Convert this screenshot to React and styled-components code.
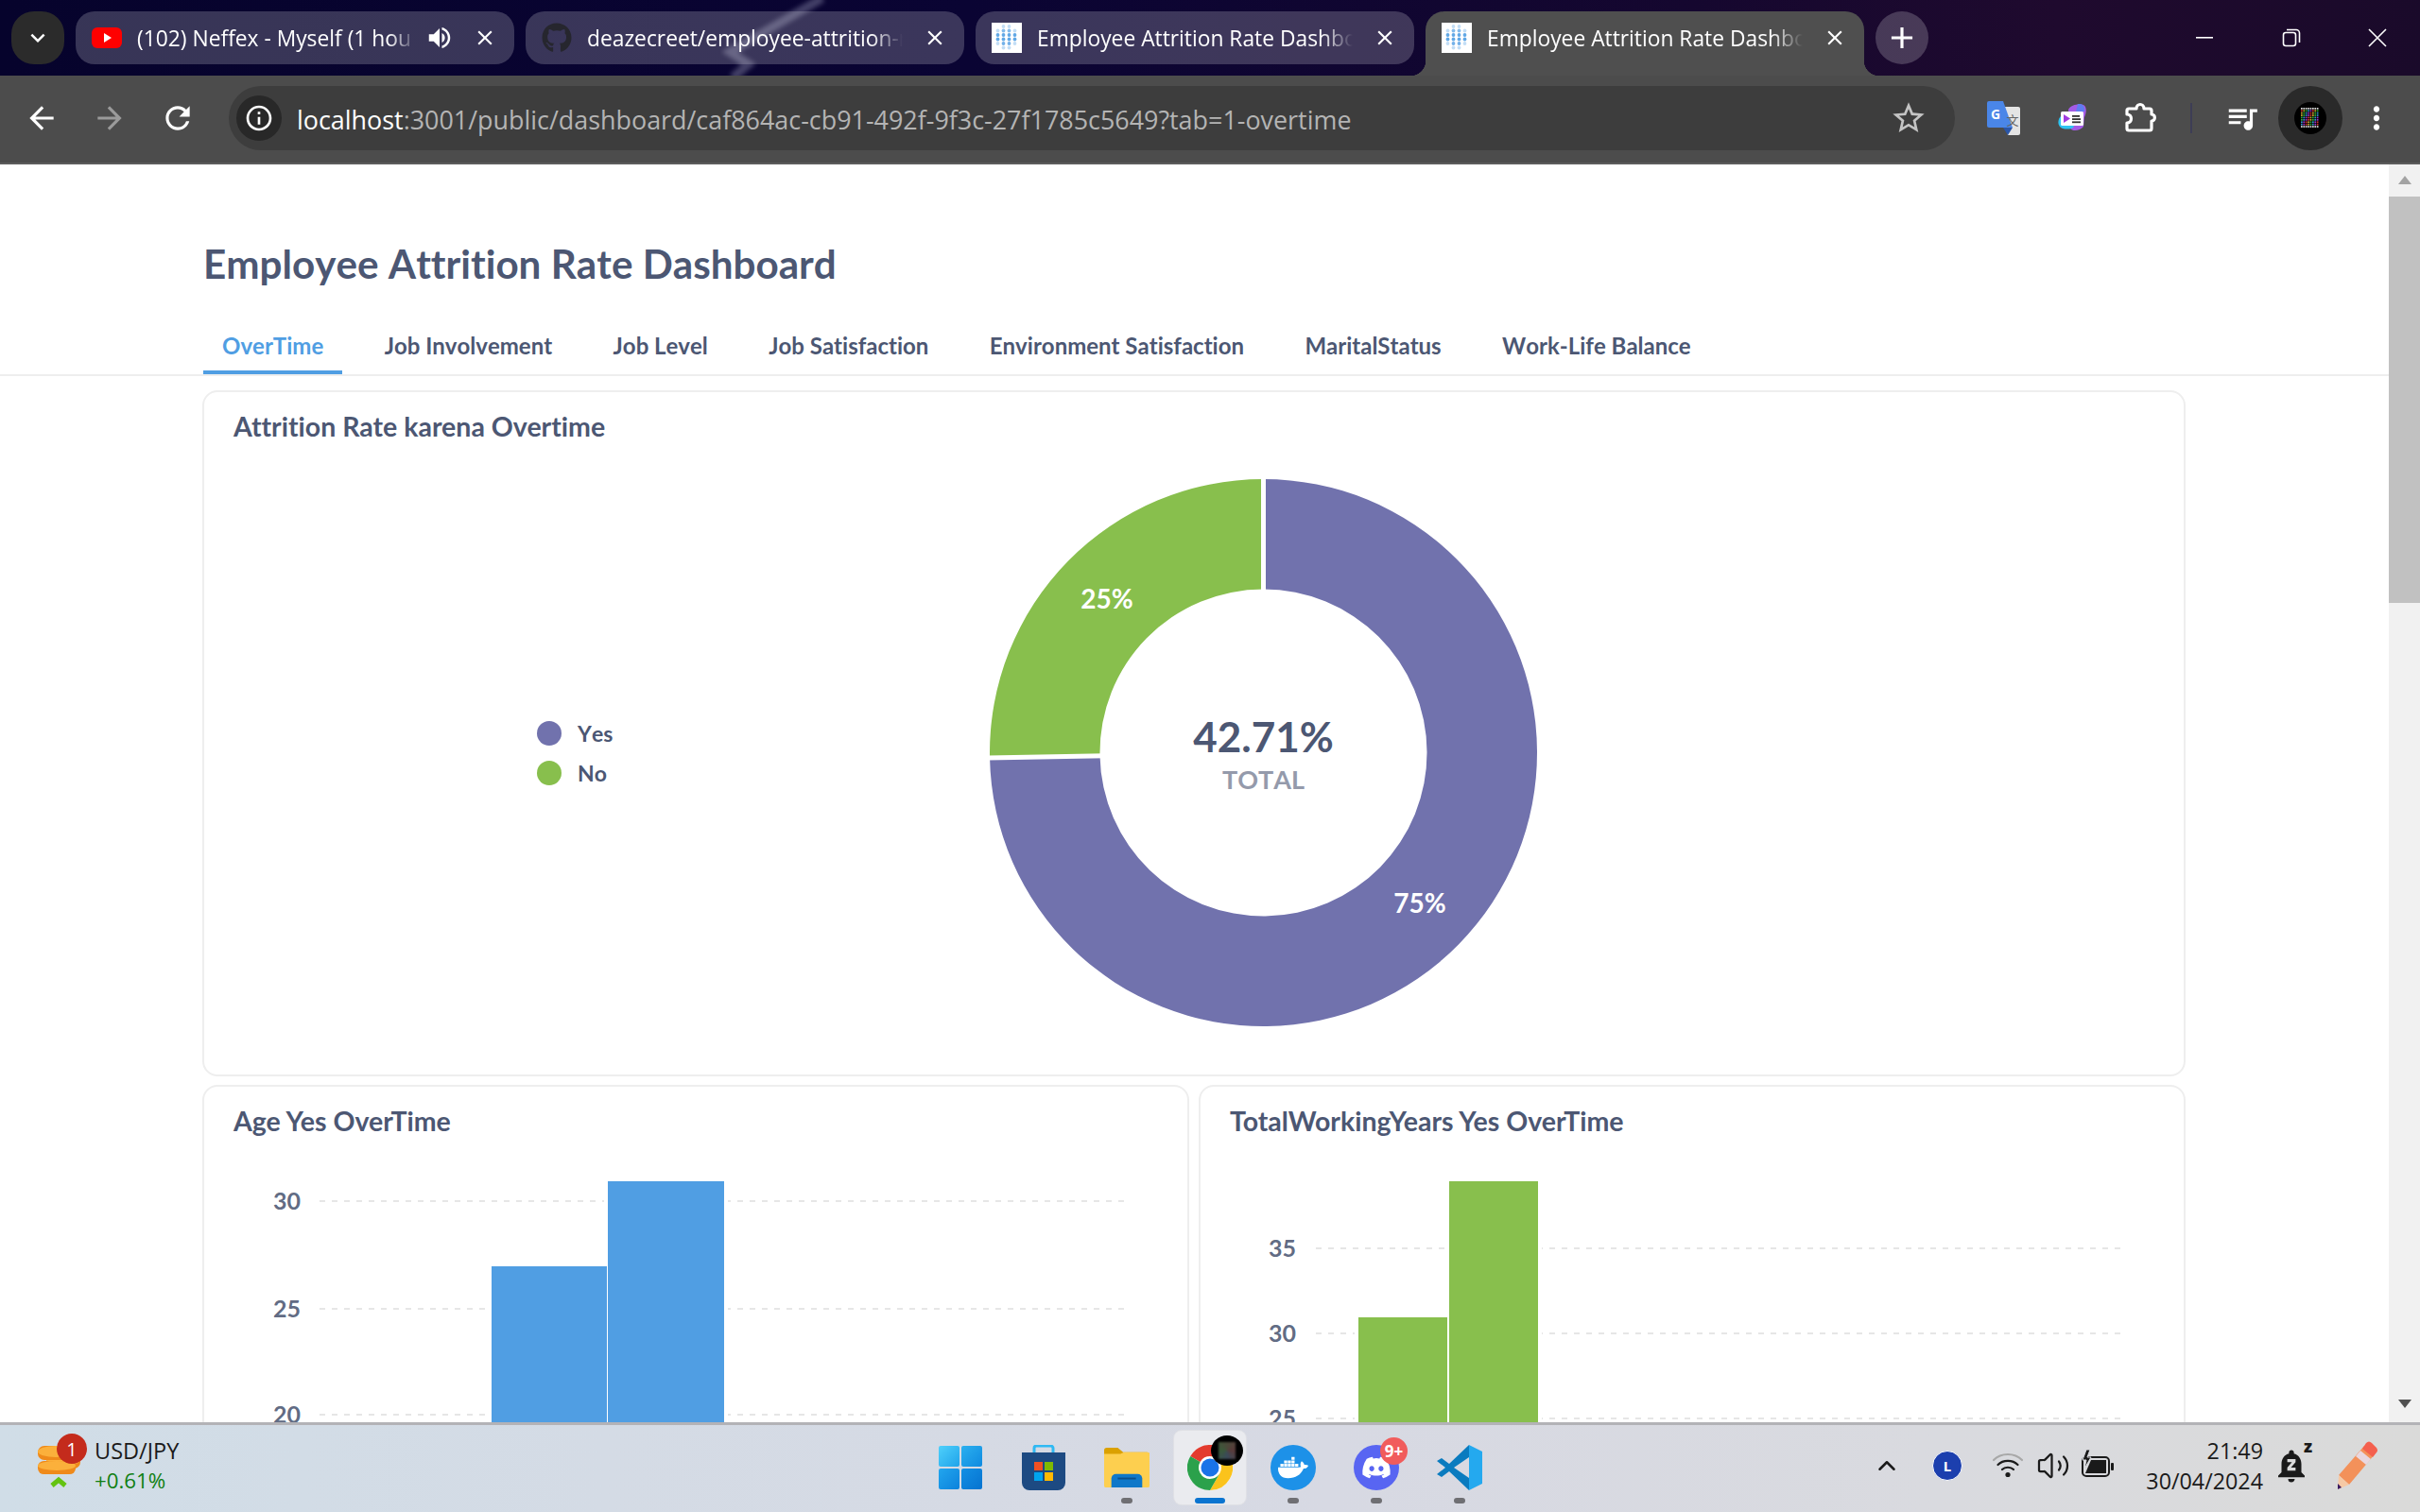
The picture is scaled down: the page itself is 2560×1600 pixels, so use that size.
import React from 'react';
import styled, { createGlobalStyle } from 'styled-components';
import { MdArrowBack, MdArrowForward, MdRefresh, MdInfoOutline, MdStarBorder, MdClose, MdAdd, MdMoreVert, MdQueueMusic, MdVolumeUp, MdKeyboardArrowDown, MdNotificationsPaused } from 'react-icons/md';
import { FaGithub, FaDocker, FaDiscord } from 'react-icons/fa';
import { Volume2, ChevronUp } from 'lucide-react';

const Global = createGlobalStyle`
  html, body { margin: 0; padding: 0; height: 100%; overflow: hidden; background: #fff; }
  #root { height: 100%; }
  * { box-sizing: border-box; }
`;

const Screen = styled.div`
  width: 2560px; height: 1600px; display: flex; flex-direction: column; overflow: hidden;
  font-family: "Lato", "Liberation Sans", sans-serif;
`;

/* ---------- browser chrome ---------- */
const TabStrip = styled.div`
  position: relative; height: 80px; flex: none; display: flex; gap: 12px; padding: 12px 0 0 12px;
  background: linear-gradient(90deg, #06032c 0%, #0a0433 40%, #15072f 70%, #1f0a2e 85%, #1a0a2a 100%);
`;
const Streak = styled.svg`
  position: absolute; left: 0; top: 0; width: 1000px; height: 80px;
`;
const TabListBtn = styled.div`
  position: relative; width: 56px; height: 56px; border-radius: 24px; background: #2b2b2b; color: #fff;
  display: flex; align-items: center; justify-content: center; font-size: 30px; flex: none;
`;
const Tab = styled.div`
  position: relative; width: 464px; flex: none; display: flex; align-items: center;
  height: ${p => (p.$active ? '68px' : '56px')};
  padding: ${p => (p.$active ? '0 7px 12px 17px' : '0 7px 0 17px')};
  border-radius: ${p => (p.$active ? '20px 20px 0 0' : '20px')};
  background: ${p => (p.$active ? '#4f4f4f' : 'rgba(255,255,255,0.2)')};
  color: #fff; font: 400 22.8px "Open Sans", sans-serif;
  ${p => p.$active && `
    &::before, &::after { content: ''; position: absolute; bottom: 0; width: 16px; height: 16px; }
    &::before { left: -16px; background: radial-gradient(circle at 0 0, transparent 16px, #4f4f4f 16.5px); }
    &::after { right: -16px; background: radial-gradient(circle at 100% 0, transparent 16px, #4f4f4f 16.5px); }
  `}
`;
const TabTitle = styled.span`
  flex: 1; min-width: 0; margin-left: 16px; margin-right: ${p => p.$gap || 0}px; white-space: nowrap; overflow: hidden;
  -webkit-mask-image: linear-gradient(90deg, #000 90%, transparent 100%);
  mask-image: linear-gradient(90deg, #000 90%, transparent 100%);
`;
const TabGlyph = styled.span`
  width: 48px; height: 48px; flex: none; display: flex; align-items: center; justify-content: center; font-size: ${p => p.$size || 26}px;
`;
const FavBox = styled.span`
  width: 32px; height: 32px; flex: none; display: flex; align-items: center; justify-content: center;
  color: #26262e; font-size: 32px;
`;
const NewTab = styled.div`
  position: relative; width: 56px; height: 56px; border-radius: 50%; background: rgba(255,255,255,0.2); color: #fff; flex: none;
  display: flex; align-items: center; justify-content: center; font-size: 38px;
`;
const WinControls = styled.div`
  position: relative; margin-left: auto; display: flex; height: 56px;
`;
const WinBtn = styled.div`
  width: 91px; display: flex; align-items: center; justify-content: center;
`;
const Toolbar = styled.div`
  height: 94px; flex: none; display: flex; align-items: center; padding: 0 0 2px 8px;
  background: #4c4c4c; border-bottom: 2px solid #5c5c5c;
`;
const ToolBtn = styled.div`
  width: 72px; height: 72px; flex: none; display: flex; align-items: center; justify-content: center;
  color: ${p => p.$dim ? '#9a9a9a' : '#fff'}; font-size: ${p => p.$size || 38}px;
`;
const Omnibox = styled.div`
  width: 1826px; height: 68px; margin: 0 16px 0 18px; border-radius: 34px; background: #3d3d3d; flex: none;
  display: flex; align-items: center; padding: 0 12px 0 8px; font: 400 26.9px "Open Sans", sans-serif;
`;
const InfoBadge = styled.div`
  width: 48px; height: 48px; border-radius: 50%; background: #282828; color: #fff; font-size: 32px; flex: none;
  display: flex; align-items: center; justify-content: center;
`;
const Url = styled.div`
  flex: 1; margin-left: 16px; padding-top: 2px; color: #b4b4b4; white-space: nowrap;
  & b { font-weight: 400; color: #fff; }
`;
const StarBtn = styled.div`
  width: 50px; color: #c4c4c4; font-size: 40px; display: flex; justify-content: center; margin-right: 12px;
`;
const Divider = styled.div`
  width: 2px; height: 32px; margin: 0 17px; background: #3d3d55; flex: none;
`;
const Avatar = styled.div`
  width: 68px; height: 68px; border-radius: 50%; background: #2a2a2a; margin-left: 2px; flex: none;
  display: flex; align-items: center; justify-content: center;
`;

/* ---------- page ---------- */
const Viewport = styled.div`
  flex: 1; min-height: 0; display: flex; background: #fff;
`;
const Page = styled.main`
  flex: 1; min-width: 0; overflow: hidden; font-kerning: none; font-variant-ligatures: none;
`;
const Title = styled.h1`
  margin: 0; padding: 83px 0 0 215px; font-size: 42.2px; line-height: 44px; font-weight: 700; color: #4c5773;
`;
const TabNav = styled.nav`
  display: flex; gap: 24.4px; padding-left: 215px; margin-top: 35px; height: 62px; border-bottom: 2px solid #eeeeee;
`;
const NavItem = styled.div`
  height: 60px; padding: 2px 20px 0; display: flex; align-items: center; font-size: 24px; font-weight: 700;
  color: ${p => (p.$active ? '#509ee3' : '#4c5773')};
  border-bottom: 4px solid ${p => (p.$active ? '#509ee3' : 'transparent')};
`;
const Grid = styled.div`
  display: grid; grid-template-columns: 1fr 1fr; gap: 9px 10px; width: 2098px; margin: 15px 0 0 214px;
`;
const Card = styled.section`
  grid-column: ${p => (p.$wide ? '1 / 3' : 'auto')};
  height: ${p => p.$h}px; border: 2px solid #eeeeee; border-radius: 16px; background: #fff; padding-top: 21px;
`;
const CardTitle = styled.h2`
  margin: 0; padding-left: 31px; font-size: 28.5px; line-height: 30px; font-weight: 700; color: #4c5773; font-kerning: normal;
`;
const DonutBody = styled.div`
  display: flex; align-items: center; padding: 40px 0 0 352px;
`;
const Legend = styled.div`
  width: 479px; flex: none; display: flex; flex-direction: column; gap: 16px; padding-top: 2px;
`;
const LegendRow = styled.div`
  display: flex; align-items: center; gap: 17px; height: 26px; font-size: 23px; font-weight: 700; color: #4c5773;
`;
const LegendDot = styled.span`
  width: 26px; height: 26px; border-radius: 50%; background: ${p => p.$c};
`;
const ChartSvg = styled.svg`
  display: block; width: 1040px; height: 400px; font-family: "Lato", sans-serif;
`;
const DonutSvg = styled.svg`
  flex: none; margin: -2px; font-family: "Lato", sans-serif;
`;

const Scrollbar = styled.div`
  width: 33px; flex: none; background: #f1f1f1; display: flex; flex-direction: column; align-items: center; padding-top: 12px;
`;
const ScrollArrow = styled.div`
  width: 0; height: 0; border-left: 7px solid transparent; border-right: 7px solid transparent;
  ${p => p.$down ? 'border-top: 9px solid #505050; margin-top: auto; margin-bottom: 15px;' : 'border-bottom: 9px solid #a3a3a3;'}
`;
const ScrollThumb = styled.div`
  width: 100%; height: 430px; margin-top: 13px; background: #c1c1c1;
`;

/* ---------- taskbar ---------- */
const Taskbar = styled.footer`
  height: 95px; flex: none; display: flex; border-top: 3px solid #b3b3b7;
  background: linear-gradient(90deg, #d0dde7 0%, #d4dbe5 25%, #d7d9e3 55%, #d9dadf 80%, #dadad9 100%);
  font-family: "Open Sans", sans-serif;
`;
const Ticker = styled.div`
  width: 972px; flex: none; display: flex; padding: 9px 0 0 37px; gap: 13px;
`;
const CoinWrap = styled.div`
  position: relative; width: 50px; height: 66px; flex: none;
`;
const CoinBadge = styled.span`
  position: absolute; left: 23px; top: 0; width: 32px; height: 32px; border-radius: 50%; background: #c42b1c; color: #fff;
  font-size: 20px; display: flex; align-items: center; justify-content: center;
`;
const TickerText = styled.div`
  display: flex; flex-direction: column; gap: 2px; padding-top: 4px; font-size: 23.5px; line-height: 29px; color: #1a1a1a;
`;
const TickerDelta = styled.span`
  color: #0f7f12; font-size: 22.3px;
`;
const Apps = styled.div`
  display: flex; flex: none;
`;
const AppSlot = styled.div`
  position: relative; width: 88px; display: flex; flex-direction: column; align-items: center; padding-top: 21px; gap: 8px;
  ${p => p.$active && `
    &::before { content: ''; position: absolute; left: 6px; top: 6px; width: 76px; height: 78px; border-radius: 8px; background: #eaebef; box-shadow: 0 0 0 1px #dfe0e5; }
  `}
`;
const AppIcon = styled.div`
  position: relative; width: 48px; height: 48px; display: flex; align-items: center; justify-content: center;
`;
const Pip = styled.span`
  position: relative; width: ${p => (p.$active ? '32px' : '12px')}; height: 6px; border-radius: 3px;
  background: ${p => (p.$active ? '#0a74d0' : p.$none ? 'transparent' : '#6f6f73')};
`;
const WinTiles = styled.div`
  display: grid; grid-template-columns: 22px 22px; grid-template-rows: 22px 22px; gap: 2px;
`;
const WinTile = styled.span`
  border-radius: 2px; background: linear-gradient(135deg, ${p => p.$a}, ${p => p.$b});
`;
const RoundLogo = styled.div`
  width: 48px; height: 48px; border-radius: 50%; background: ${p => p.$c}; color: #fff; font-size: ${p => p.$s}px;
  display: flex; align-items: center; justify-content: center;
`;
const NineBadge = styled.span`
  position: absolute; left: 28px; top: -8px; width: 29px; height: 29px; border-radius: 50%; background: #f15c5c; color: #fff;
  font-size: 17px; font-weight: 700; display: flex; align-items: center; justify-content: center;
`;
const ChromeBlob = styled.span`
  position: absolute; left: 25px; top: -10px; width: 34px; height: 32px; border-radius: 50%; background: #000;
  display: flex; align-items: center; justify-content: center;
  &::after { content: ''; width: 18px; height: 18px; filter: blur(1px); background: conic-gradient(#4a4a3a, #5a3a3a, #3a4a5a, #3a5a3a, #4a4a3a); }
`;
const Tray = styled.div`
  margin-left: auto; padding-right: 34px; display: flex; align-items: center; padding-bottom: 6px; color: #1a1a1a;
`;
const TraySlot = styled.div`
  position: relative; width: ${p => p.$w}px; margin-left: ${p => p.$ml || 0}px; display: flex; align-items: center; justify-content: center; font-size: ${p => p.$s || 30}px;
`;
const LBadge = styled.div`
  width: 32px; height: 32px; border-radius: 50%; background: #1c3fae; border: 1px solid #fff; color: #fff; font: 700 15px "Open Sans", sans-serif;
  display: flex; align-items: center; justify-content: center;
`;
const Clock = styled.div`
  width: 150px; text-align: right; font-size: 23.3px; line-height: 32px; color: #1a1a1a; white-space: nowrap;
`;
const SnoozeZ = styled.span`
  position: absolute; right: 2px; top: -12px; font: 800 18px "Open Sans", sans-serif; color: #1a1a1a;
`;

/* ---------- drawings ---------- */
const MetabaseFav = () => {
  const cols = [6.5, 12.5, 18.5, 24.5];
  const rows = [4, 8.5, 13, 17.5, 22, 26.5];
  const o = [[0,.35,.35,0],[.35,.7,.7,.35],[.9,.9,.9,.9],[.9,.9,.9,.9],[.35,.8,.8,.35],[0,.35,.35,0]];
  return (
    <svg width="32" height="32" viewBox="0 0 32 32" style={{flex:'none'}}>
      <rect width="32" height="32" fill="#fff" />
      {rows.map((y, r) => cols.map((x, c) => <circle key={r + '-' + c} cx={x} cy={y} r="1.9" fill="#509ee3" opacity={o[r][c]} />))}
    </svg>
  );
};
const YouTubeFav = () => (
  <svg width="32" height="32" viewBox="0 0 32 32">
    <rect x="0" y="5" width="32" height="22" rx="6" fill="#f00" />
    <path d="M13 11 L21 16 L13 21 Z" fill="#fff" />
  </svg>
);
const ChromeLogo = () => (
  <svg width="48" height="48" viewBox="0 0 48 48">
    <circle cx="24" cy="24" r="24" fill="#fff" />
    <path d="M3.2 12 A24 24 0 0 1 44.8 12 L24 12 A12 12 0 0 0 13.6 18 Z" fill="#e33b2e" />
    <path d="M44.8 12 A24 24 0 0 1 24 48 L34.39 30 A12 12 0 0 0 24 12 Z" fill="#fbc31c" />
    <path d="M24 48 A24 24 0 0 1 3.2 12 L13.6 18 A12 12 0 0 0 34.39 30 Z" fill="#2ba14b" />
    <circle cx="24" cy="24" r="9.5" fill="#1a73e8" />
  </svg>
);
const StoreLogo = () => (
  <svg width="48" height="48" viewBox="0 0 48 48">
    <path d="M14 9 V3.5 A2.5 2.5 0 0 1 16.5 1 H31.5 A2.5 2.5 0 0 1 34 3.5 V9" fill="none" stroke="#2fb9f3" strokeWidth="3" />
    <path d="M1 8 H47 V40 A8 8 0 0 1 39 48 H9 A8 8 0 0 1 1 40 Z" fill="#1d4a82" />
    <rect x="14" y="18" width="9" height="9" fill="#f25022" />
    <rect x="25" y="18" width="9" height="9" fill="#7fba00" />
    <rect x="14" y="29" width="9" height="9" fill="#00a4ef" />
    <rect x="25" y="29" width="9" height="9" fill="#ffb900" />
  </svg>
);
const FolderLogo = () => (
  <svg width="50" height="44" viewBox="0 0 50 44">
    <path d="M0 3 A3 3 0 0 1 3 0 H15 L21 5 H47 A3 3 0 0 1 50 8 V12 H0 Z" fill="#dba100" />
    <path d="M0 7 H18 L22 5 H48 A2 2 0 0 1 50 7 V42 A2 2 0 0 1 48 44 H2 A2 2 0 0 1 0 42 Z" fill="#fdcf4f" />
    <path d="M8 44 V34 A5 5 0 0 1 13 29 H37 A5 5 0 0 1 42 34 V44 Z" fill="#0f78c9" />
    <rect x="15" y="33" width="20" height="2" fill="#0a4f8c" />
  </svg>
);
const VSCodeLogo = () => (
  <svg width="48" height="48" viewBox="0 0 48 48">
    <path d="M34 0 L48 7 V41 L34 48 Z" fill="#24a9ef" />
    <path d="M34 0 L13 20 L5 14 L0 17 L9 24 L0 31 L5 34 L13 28 L34 48 V35 L18 24 L34 13 Z" fill="#0a7bbf" />
  </svg>
);
const Coin = ({ x, y, w, h, t }) => (
  <g>
    <rect x={x} y={y} width={w} height={h} rx={h / 2.2} fill="#ef8a1a" />
    <ellipse cx={x + w / 2} cy={y + t} rx={w / 2} ry={t} fill="#fbb03b" />
  </g>
);
const CoinsIcon = () => (
  <svg width="50" height="66" viewBox="0 0 50 66">
    <Coin x={12} y={22} w={36} h={15} t={6} />
    <Coin x={3} y={13} w={38} h={15} t={6} />
    <Coin x={3} y={29} w={40} h={14} t={5} />
    <path d="M18 55 L25 49 L32 55" fill="none" stroke="#63c311" strokeWidth="5" />
  </svg>
);
const TranslateIcon = () => (
  <svg width="36" height="36" viewBox="0 0 36 36">
    <path d="M16 6 H33 A2 2 0 0 1 35 8 V34 A2 2 0 0 1 33 36 H22 Z" fill="#e4e4e4" />
    <path d="M2 0 H17 L27 28 H2 A2 2 0 0 1 0 26 V2 A2 2 0 0 1 2 0 Z" fill="#4a86e8" />
    <text x="9" y="19" fontFamily="Open Sans" fontSize="14" fontWeight="700" fill="#fff" textAnchor="middle">G</text>
    <text x="27" y="25" fontFamily="Noto Sans CJK SC" fontSize="13" fill="#666" textAnchor="middle">文</text>
    <path d="M17 28 H27 L22 36 Z" fill="#2a56a8" />
  </svg>
);
const ReaderIcon = () => (
  <svg width="32" height="30" viewBox="0 0 32 30">
    <path d="M12 6 C14 1 24 -1 28 1 C32 3 31 10 29 14 L28 24 C24 29 16 29 14 26 Z" fill="#a45be6" />
    <path d="M22 0 C26 -1 30 2 29 8 L20 8 Z" fill="#5f7cf0" />
    <path d="M5 12 C0 16 0 24 6 26 C10 27 16 27 18 24 L10 10 Z" fill="#2ec4f1" />
    <rect x="4" y="8" width="24" height="15" rx="1.5" fill="#fff" />
    <path d="M7 11 L14 15.5 L7 20 Z" fill="#a13be0" />
    <rect x="16" y="12" width="8" height="1.8" fill="#333" />
    <rect x="16" y="15.2" width="9" height="1.8" fill="#333" />
    <rect x="16" y="18.4" width="9" height="1.8" fill="#333" />
  </svg>
);
const PuzzleIcon = () => (
  <svg width="36" height="36" viewBox="-1 0 36 36" fill="none" stroke="#fff" strokeWidth="3.2" strokeLinejoin="round">
    <path d="M5 8 H13 C13 2 21 2 21 8 H27 A2 2 0 0 1 29 10 V14 C33.5 14 33.5 21 29 21 V29 A2 2 0 0 1 27 31 H5 A2 2 0 0 1 3 29 V23 C9 23 9 14 3 14 V10 A2 2 0 0 1 5 8Z" />
  </svg>
);
const MosaicAvatar = () => {
  const colors = ['#c33','#ca3','#3a3','#39c','#93c','#ddd'];
  const cells = [];
  for (let r = 0; r < 9; r++) for (let c = 0; c < 8; c++) {
    const col = r < 1 || r > 7 ? '#ddd' : colors[(c + Math.floor(r / 2)) % 5];
    cells.push(<rect key={r + '_' + c} x={7 + c * 2.4} y={6 + r * 2.4} width="1.7" height="1.7" fill={col} />);
  }
  return (
    <svg width="34" height="34" viewBox="0 0 34 34">
      <circle cx="17" cy="17" r="17" fill="#000" />
      {cells}
    </svg>
  );
};
const WifiIcon = () => (
  <svg width="34" height="30" viewBox="0 0 34 30" fill="none" strokeLinecap="round" strokeWidth="2.2">
    <path d="M2 9 C10 1 24 1 32 9" stroke="#a8a8a8" />
    <path d="M6.5 14 C12 8.5 22 8.5 27.5 14" stroke="#1a1a1a" />
    <path d="M11 19 C14 16 20 16 23 19" stroke="#1a1a1a" />
    <circle cx="17" cy="24.5" r="2.6" fill="#1a1a1a" stroke="none" />
  </svg>
);
const BatteryIcon = () => (
  <svg width="38" height="34" viewBox="0 0 38 34">
    <rect x="2" y="8" width="28" height="20" rx="4" fill="none" stroke="#1a1a1a" strokeWidth="2" />
    <path d="M5 25 L11 11 H27 V25 Z" fill="#1a1a1a" />
    <rect x="32" y="14" width="3" height="8" rx="1" fill="#1a1a1a" />
    <path d="M6 0 L2 11 H6 L4 20 L11 8 H7 L10 0 Z" fill="#1a1a1a" stroke="#d9dadf" strokeWidth="1" />
  </svg>
);
const PencilIcon = () => (
  <svg width="44" height="54" viewBox="0 0 44 54">
    <path d="M29 6 L40 15 L13 47 L2 37 Z" fill="#f3915a" />
    <path d="M25 11 L36 20 L31 26 L20 17 Z" fill="#e8d7e0" />
    <path d="M31 3 Q34 0 37 3 L42 8 Q44 11 42 13 L38 18 L27 9 Z" fill="#f4604e" />
    <path d="M2 37 L13 47 L1 52 Z" fill="#f6c9a5" />
    <path d="M1 46 L5 50 L1 52 Z" fill="#3a1a60" />
  </svg>
);

/* ---------- charts ---------- */
const GREEN = '#88bf4d', BLUE = '#509ee3', PURPLE = '#7172ad', INK = '#4c5773';
const polar = (r, deg) => {
  const a = ((deg - 90) * Math.PI) / 180;
  return [291.5 + r * Math.cos(a), 292.5 + r * Math.sin(a)];
};
const arc = (R, r, a0, a1) => {
  const large = a1 - a0 > 180 ? 1 : 0;
  const [x0, y0] = polar(R, a0), [x1, y1] = polar(R, a1), [x2, y2] = polar(r, a1), [x3, y3] = polar(r, a0);
  return `M${x0} ${y0} A${R} ${R} 0 ${large} 1 ${x1} ${y1} L${x2} ${y2} A${r} ${r} 0 ${large} 0 ${x3} ${y3} Z`;
};
const SPLIT = 268.9;
const Donut = () => {
  const [sx0, sy0] = polar(168, SPLIT), [sx1, sy1] = polar(294, SPLIT);
  return (
    <DonutSvg width="584" height="584" viewBox="0 0 584 584">
      <path d={arc(289.5, 173, 0, SPLIT)} fill={PURPLE} />
      <path d={arc(289.5, 173, SPLIT, 360)} fill={GREEN} />
      <line x1="291.5" y1="0" x2="291.5" y2="122" stroke="#fff" strokeWidth="5" />
      <line x1={sx0} y1={sy0} x2={sx1} y2={sy1} stroke="#fff" strokeWidth="5" />
      <text x="126" y="140" fontSize="28" fontWeight="700" fill="#fff" textAnchor="middle">25%</text>
      <text x="457" y="462" fontSize="28" fontWeight="700" fill="#fff" textAnchor="middle">75%</text>
      <text x="291.5" y="292" fontSize="44" fontWeight="700" fill={INK} textAnchor="middle">42.71%</text>
      <text x="291.5" y="331" fontSize="27" fontWeight="700" fill="#949aab" textAnchor="middle">TOTAL</text>
    </DonutSvg>
  );
};
const Bars = ({ color, bars, grid, labelX, x0, x1 }) => (
  <ChartSvg viewBox="0 0 1040 400">
    {grid.map(g => (
      <g key={g.v}>
        <text x={labelX} y={g.y + 9} fontSize="25" fontWeight="700" fill={INK} fillOpacity="0.9" textAnchor="end">{g.v}</text>
        <line x1={x0} x2={x1} y1={g.y} y2={g.y} stroke="#e6e6e6" strokeWidth="2" strokeDasharray="6 7" />
      </g>
    ))}
    {bars.map(b => <rect key={'h' + b.x} x={b.x - 4} y={b.y} width={b.w + 8} height={400 - b.y} fill="#fff" />)}
    {bars.map(b => <rect key={b.x} x={b.x} y={b.y} width={b.w} height={400 - b.y} fill={color} />)}
  </ChartSvg>
);

const navItems = ['OverTime', 'Job Involvement', 'Job Level', 'Job Satisfaction', 'Environment Satisfaction', 'MaritalStatus', 'Work-Life Balance'];

const Minimize = () => <svg width="20" height="20" viewBox="0 0 20 20"><rect x="0" y="9" width="18" height="1.6" fill="#fff" /></svg>;
const Restore = () => (
  <svg width="20" height="20" viewBox="0 0 20 20" fill="none" stroke="#fff" strokeWidth="1.6">
    <rect x="1.5" y="4.5" width="13" height="14" rx="2.5" />
    <path d="M5 1.5 H15 A3.5 3.5 0 0 1 18.5 5 V15" />
  </svg>
);
const CloseX = () => <svg width="22" height="22" viewBox="0 0 22 22" stroke="#fff" strokeWidth="1.6"><path d="M2 2 L20 20 M20 2 L2 20" /></svg>;

export default function App() {
  return (
    <Screen>
      <Global />
      <TabStrip>
        <Streak viewBox="0 0 1000 80" fill="none">
          <defs><filter id="soft"><feGaussianBlur stdDeviation="2.5" /></filter></defs>
          <path d="M870 -2 L772 55 L792 68 L775 82" stroke="#9a9ab8" strokeWidth="9" opacity="0.4" filter="url(#soft)" />
        </Streak>
        <TabListBtn><MdKeyboardArrowDown /></TabListBtn>
        <Tab>
          <YouTubeFav />
          <TabTitle>(102) Neffex - Myself (1 hou</TabTitle>
          <TabGlyph $size={30}><MdVolumeUp /></TabGlyph>
          <TabGlyph><MdClose /></TabGlyph>
        </Tab>
        <Tab>
          <FavBox><FaGithub /></FavBox>
          <TabTitle $gap={10}>deazecreet/employee-attrition-rate</TabTitle>
          <TabGlyph><MdClose /></TabGlyph>
        </Tab>
        <Tab>
          <MetabaseFav />
          <TabTitle $gap={10}>Employee Attrition Rate Dashboard</TabTitle>
          <TabGlyph><MdClose /></TabGlyph>
        </Tab>
        <Tab $active>
          <MetabaseFav />
          <TabTitle $gap={10}>Employee Attrition Rate Dashboard</TabTitle>
          <TabGlyph><MdClose /></TabGlyph>
        </Tab>
        <NewTab><MdAdd /></NewTab>
        <WinControls>
          <WinBtn><Minimize /></WinBtn>
          <WinBtn><Restore /></WinBtn>
          <WinBtn><CloseX /></WinBtn>
        </WinControls>
      </TabStrip>

      <Toolbar>
        <ToolBtn><MdArrowBack /></ToolBtn>
        <ToolBtn $dim><MdArrowForward /></ToolBtn>
        <ToolBtn><MdRefresh /></ToolBtn>
        <Omnibox>
          <InfoBadge><MdInfoOutline /></InfoBadge>
          <Url><b>localhost</b>:3001/public/dashboard/caf864ac-cb91-492f-9f3c-27f1785c5649?tab=1-overtime</Url>
          <StarBtn><MdStarBorder /></StarBtn>
        </Omnibox>
        <ToolBtn><TranslateIcon /></ToolBtn>
        <ToolBtn><ReaderIcon /></ToolBtn>
        <ToolBtn><PuzzleIcon /></ToolBtn>
        <Divider />
        <ToolBtn><MdQueueMusic /></ToolBtn>
        <Avatar><MosaicAvatar /></Avatar>
        <ToolBtn><MdMoreVert /></ToolBtn>
      </Toolbar>

      <Viewport>
        <Page>
          <Title>Employee Attrition Rate Dashboard</Title>
          <TabNav>
            {navItems.map((t, i) => <NavItem key={t} $active={i === 0}>{t}</NavItem>)}
          </TabNav>
          <Grid>
            <Card $wide $h={726}>
              <CardTitle>Attrition Rate karena Overtime</CardTitle>
              <DonutBody>
                <Legend>
                  <LegendRow><LegendDot $c={PURPLE} />Yes</LegendRow>
                  <LegendRow><LegendDot $c={GREEN} />No</LegendRow>
                </Legend>
                <Donut />
              </DonutBody>
            </Card>
            <Card $h={600}>
              <CardTitle>Age Yes OverTime</CardTitle>
              <Bars color={BLUE} labelX={102} x0={122} x1={979}
                bars={[{ x: 304, w: 122, y: 139 }, { x: 427, w: 123, y: 49 }]}
                grid={[{ v: 30, y: 70 }, { v: 25, y: 184 }, { v: 20, y: 296 }]} />
            </Card>
            <Card $h={600}>
              <CardTitle>TotalWorkingYears Yes OverTime</CardTitle>
              <Bars color={GREEN} labelX={101} x0={122} x1={978}
                bars={[{ x: 167, w: 94, y: 193 }, { x: 263, w: 94, y: 49 }]}
                grid={[{ v: 35, y: 120 }, { v: 30, y: 210 }, { v: 25, y: 300 }]} />
            </Card>
          </Grid>
        </Page>
        <Scrollbar>
          <ScrollArrow />
          <ScrollThumb />
          <ScrollArrow $down />
        </Scrollbar>
      </Viewport>

      <Taskbar>
        <Ticker>
          <CoinWrap>
            <CoinsIcon />
            <CoinBadge>1</CoinBadge>
          </CoinWrap>
          <TickerText>
            <span>USD/JPY</span>
            <TickerDelta>+0.61%</TickerDelta>
          </TickerText>
        </Ticker>
        <Apps>
          <AppSlot>
            <AppIcon>
              <WinTiles>
                <WinTile $a="#4fd0fb" $b="#1fa3ea" />
                <WinTile $a="#2bb0ef" $b="#0f8ae0" />
                <WinTile $a="#22a6ee" $b="#0c82dc" />
                <WinTile $a="#1390e4" $b="#0673d0" />
              </WinTiles>
            </AppIcon>
            <Pip $none />
          </AppSlot>
          <AppSlot><AppIcon><StoreLogo /></AppIcon><Pip $none /></AppSlot>
          <AppSlot><AppIcon><FolderLogo /></AppIcon><Pip /></AppSlot>
          <AppSlot $active>
            <AppIcon><ChromeLogo /><ChromeBlob /></AppIcon>
            <Pip $active />
          </AppSlot>
          <AppSlot><AppIcon><RoundLogo $c="#1d91e8" $s={32}><FaDocker /></RoundLogo></AppIcon><Pip /></AppSlot>
          <AppSlot>
            <AppIcon><RoundLogo $c="#5865f2" $s={32}><FaDiscord /></RoundLogo><NineBadge>9+</NineBadge></AppIcon>
            <Pip />
          </AppSlot>
          <AppSlot><AppIcon><VSCodeLogo /></AppIcon><Pip /></AppSlot>
        </Apps>
        <Tray>
          <TraySlot $w={64}><ChevronUp size={30} strokeWidth={2} /></TraySlot>
          <TraySlot $w={64}><LBadge>L</LBadge></TraySlot>
          <TraySlot $w={48} $ml={8}><WifiIcon /></TraySlot>
          <TraySlot $w={48}><Volume2 size={36} strokeWidth={1.5} /></TraySlot>
          <TraySlot $w={48}><BatteryIcon /></TraySlot>
          <Clock>21:49<br />30/04/2024</Clock>
          <TraySlot $w={48} $ml={6} $s={42}><MdNotificationsPaused /><SnoozeZ>z</SnoozeZ></TraySlot>
          <TraySlot $w={64} $ml={14}><PencilIcon /></TraySlot>
        </Tray>
      </Taskbar>
    </Screen>
  );
}
